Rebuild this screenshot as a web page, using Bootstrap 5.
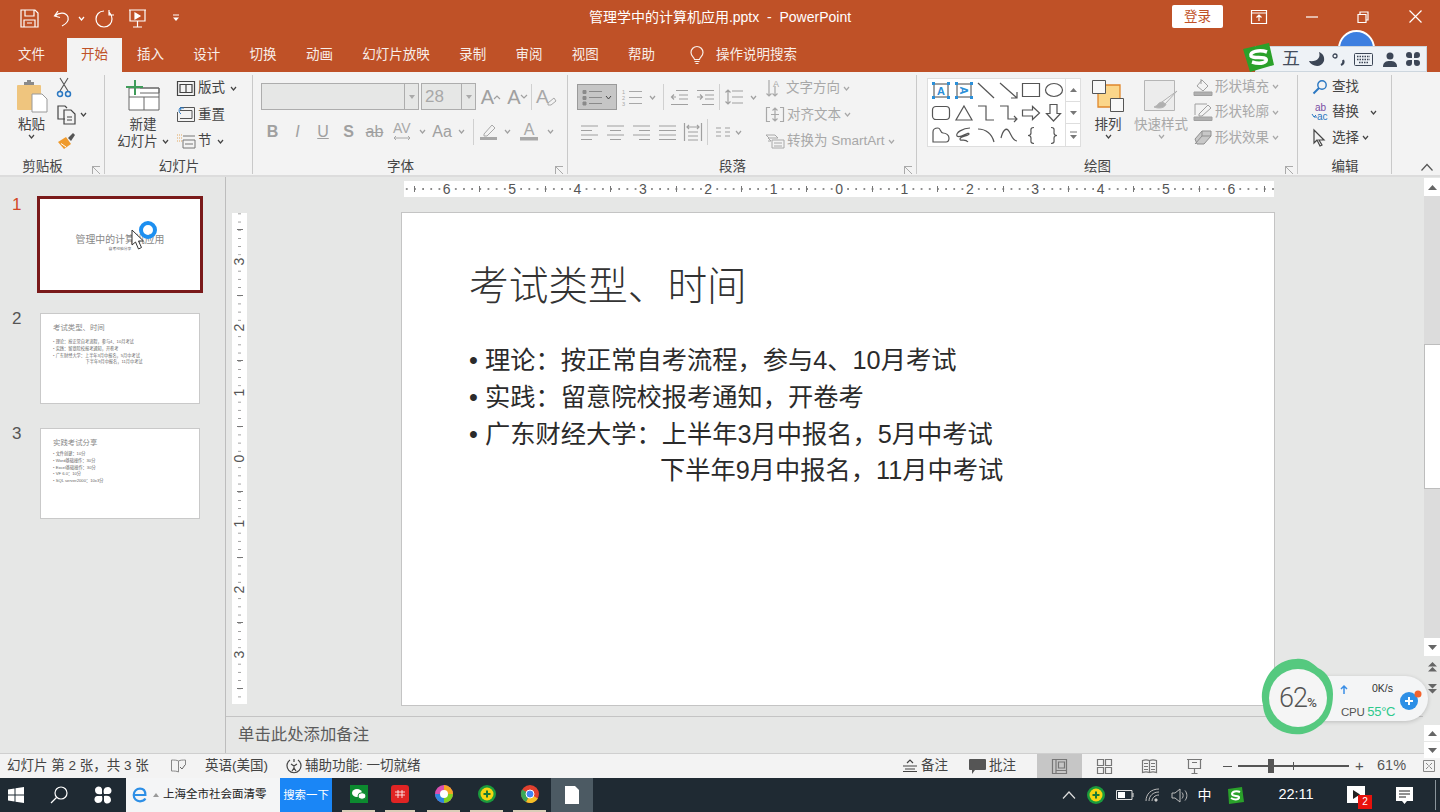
<!DOCTYPE html>
<html lang="zh-CN">
<head>
<meta charset="UTF-8">
<title>管理学中的计算机应用.pptx - PowerPoint</title>
<link href="https://cdn.jsdelivr.net/npm/bootstrap@5.3.0/dist/css/bootstrap.min.css" rel="stylesheet">
<style>
html,body{width:1440px;height:812px;overflow:hidden}
body{font-family:"Liberation Sans","Noto Sans CJK SC",sans-serif;font-size:13.5px;color:#444;background:#e6e7e6}
svg{display:block;flex:none;overflow:visible}
svg text{font-family:"Liberation Sans",sans-serif;stroke:none}
.ink{fill:none;stroke:currentColor;stroke-width:1.2}
.app-shell{width:1440px;height:812px;position:relative}

/* title bar + tabs */
.title-strip{height:36px;background:#bf5127;color:#fff;position:relative}
.qat{display:grid;grid-template-columns:20px 19px 14px 20px 22px 19px 14px 19px 25px 10px;align-items:center;height:36px;color:#fff}
.qat-chev{padding-left:5px}
.doc-title{position:absolute;left:0;right:0;top:7px;text-align:center;font-size:14px;line-height:20px}
.win-ctl{display:grid;grid-template-columns:51px 28px 16px 39px 12px 39px 12px 40px 13px;align-items:center;position:absolute;left:1172px;top:5px;height:23px}
.login-btn{background:#fff;color:#bf5127;border-radius:2px;height:23px;font-size:13.5px;line-height:23px;text-align:center;padding:0;border:0}
.tab-strip{height:36px;background:#bf5127;color:#f8eee9;display:flex;align-items:flex-end;padding-left:18px;position:relative}
.tab-item{width:56.3px;height:34px;line-height:34px;flex:none;white-space:nowrap}
.tab-file{width:49px}
.tab-on{width:55px;background:#f3f3f3;color:#bf5127;text-align:center;margin-right:15px}
.tab-wide{width:97px}
.tab-help{width:62px}
.tab-search{display:flex;align-items:center;gap:12px}
.user-dot{position:absolute;left:1338px;top:-6px;width:37px;height:37px;border-radius:50%;background:#3d7fe0;border:2px solid #fff}

/* ribbon */
.ribbon{height:105px;background:#f3f3f3;border-bottom:2px solid #dcdcdc;display:flex;position:relative}
.rib-group{display:flex;flex-direction:column;flex:none;height:103px;position:relative}
.rib-group::after{content:"";position:absolute;right:0;top:3px;bottom:1px;width:1px;background:#c9c9c9}
.rib-body{height:86px;display:flex;flex:none}
.rib-label{height:17px;line-height:17px;text-align:center;color:#444;position:relative}
.pad-left-lab{padding-right:20px}
.launcher{position:absolute;right:5px;bottom:1px;width:8px;height:8px;border-left:1px solid #aaa;border-top:1px solid #aaa;background:linear-gradient(45deg,transparent 44%,#aaa 44%,#aaa 56%,transparent 56%)}
.g-clip{width:105px}.g-slides{width:148px}.g-font{width:315px}.g-para{width:349px}.g-draw{width:381px}.g-edit{width:94px}
.big-btn{display:flex;flex-direction:column;align-items:center;padding-top:8px;line-height:17px;flex:none}
.big-icon{height:35px;display:flex;align-items:flex-start;justify-content:center;margin-bottom:1px}
.small-rows{display:flex;flex-direction:column;padding-top:3px;flex:none}
.small-row{height:26.5px;display:flex;align-items:center;gap:3px;white-space:nowrap}
.rows-tight{padding-top:2px}
.rows-tight .small-row{height:25.5px}
.chev{width:7px;height:7px;flex:none}
.off{color:#a8a8a8}
.bw-paste{width:45px;margin-left:9px}
.clip-col{margin-left:3px;width:40px}
.bw-new{width:62px;margin-left:7px}
.slide-col{margin-left:3px}
.slide-col .chev{margin-left:2px}
.font-wrap{padding:11px 0 0 8px}
.font-row{display:flex;align-items:center;height:27px}
.font-row2{height:27px;margin-top:8px;display:flex;align-items:center}
.combo{height:27px;background:#e6e7e6;border:1px solid #adadad;display:flex;justify-content:flex-end}
.combo-name{width:158px;margin-right:2px}
.combo-size{width:55px;justify-content:space-between;color:#a8a8a8;font-size:17px;line-height:25px;padding-left:3px}
.combo-drop{width:14px;border-left:1px solid #adadad;display:flex;align-items:center;justify-content:center}
.f-ic{display:flex;justify-content:center;align-items:center;flex:none;color:#a0a0a0}
.tt{font-size:20px;line-height:22px}
.v-sep{width:1px;height:26px;background:#d0d0d0;flex:none}
.font-grid-a{margin-left:1px;display:grid;grid-template-columns:27px 26px 1px 1px 28px;align-items:center}
.font-grid-b{display:grid;grid-template-columns:25px 25px 26px 25px 27px 27px 14px 26px 13px 5px 1px 5px 19px 19px 23px 20px;align-items:center;font-size:16px;margin-left:-1px}
.para-left{padding:12px 0 0 9px;width:191px;flex:none}
.para-r1{display:grid;grid-template-columns:40px 29px 12px 3px 2px 1px 2px 26px 27px 1px 4px 20px 18px;align-items:center;height:26px}
.bullet-on{height:26px;background:#c6c6c6;border:1px solid #9a9a9a;display:flex;align-items:center;justify-content:center;gap:3px;color:#666}
.para-r2{display:grid;grid-template-columns:25px 26px 26px 26px 26px 1px 1px 7px 16px 14px;align-items:center;height:26px;margin-top:9px}
.para-rt{padding-left:7px}
.gal-wrap{display:flex;padding-left:10px;padding-top:6px;flex:none}
.gallery{width:154px;height:69px;background:#fff;border:1px solid #dedede;display:flex;flex:none}
.gal-cells{display:grid;grid-template-columns:repeat(6,22.5px);grid-auto-rows:22.5px;width:137px;padding:0 0 0 2px;color:#555;place-items:center}
.gal-scroll{flex:1;display:flex;flex-direction:column;border-left:1px solid #dedede}
.gal-scroll div{flex:1;display:flex;align-items:center;justify-content:center;border-bottom:1px solid #dedede}
.gal-scroll div:last-child{border-bottom:0}
.bw-arr{width:32px;margin-left:11px}
.bw-style{width:56px;margin-left:9px}
.draw-rt{margin-left:5px}
.edit-rt{padding-left:13px;color:#444}
.ed-ic{width:18px;display:flex;justify-content:center;flex:none}
.ed-far{margin-left:8px}
.collapse-up{position:absolute;right:7px;bottom:4px;color:#555}

/* workspace */
.work-row{height:576px;display:flex}
.thumb-pane{width:226px;height:576px;border-right:1px solid #bdbdbd;padding-top:19px;flex:none;background:#e6e7e6}
.thumb-line{display:flex}
.thumb-gap-a{margin-bottom:20px}
.thumb-gap-b{margin-bottom:24px}
.thumb-no{width:40px;font-size:17px;line-height:18px;padding-left:12px;color:#555;flex:none;margin-top:-3px}
.thumb-no-on{color:#d24726;margin-top:0}
.thumb-card{width:160px;height:91px;background:#fff;border:1px solid #c9c9c9;color:#888;padding:8px 12px;flex:none;line-height:1;position:relative}
.thumb-first{width:166px;height:97px;border:3px solid #7a1a1a;margin-left:-3px;display:flex;flex-direction:column;align-items:center;padding:35px 0 0 0}
.thumb-t1{font-size:9.9px;line-height:12px;color:#888;white-space:nowrap}
.thumb-s1{font-size:3.8px;line-height:6px;color:#666;white-space:nowrap}
.thumb-t2{font-size:7.4px;line-height:12px;margin-bottom:5px;white-space:nowrap}
.thumb-t3{margin-bottom:2px}
.thumb-p{font-size:4.2px;line-height:6.8px;color:#666;white-space:pre}
.center-col{width:1197px;flex:none;display:flex;flex-direction:column}
.edit-area{height:539px;padding:4px 0 0 6px;flex:none}
.h-ruler{margin-left:172px;width:870px;height:16px;display:flex;color:#555;margin-bottom:15px;overflow:hidden;
 background:radial-gradient(circle at 1px 8px,#888 .7px,transparent 1px) 1.8px 0/8.175px 16px repeat-x #fff}
.h-ruler>span{width:65.4px;flex:none;text-align:center;font-size:14px;line-height:16px;
 background:linear-gradient(#777,#777) 0 5px/1px 6px no-repeat}
.h-ruler>span:first-child{margin-left:10px}
.h-ruler>span>b{font-weight:400;background:#fff;padding:0 2px}
.slide-row{display:flex;align-items:flex-start}
.v-ruler{width:15px;height:491px;margin-top:1px;display:flex;flex-direction:column;color:#555;overflow:hidden;flex:none;
 background:linear-gradient(#999 1px,transparent 1px) 6px .4px/3px 8.19px repeat-y #fff}
.v-ruler>span{height:65.5px;flex:none;display:flex;align-items:center;justify-content:center;font-size:14px;
 background:linear-gradient(#777,#777) 4.500px 0/6px 1px no-repeat}
.v-ruler>span:first-child{margin-top:16px}
.v-ruler>span>b{font-weight:400;transform:rotate(-90deg);background:#fff;padding:0 2px;line-height:13px}
.slide-sheet{margin-left:154px;width:874px;height:494px;background:#fff;border:1px solid #c4c4c4;padding:45px 0 0 67px;color:#222;flex:none}
.slide-h{font-size:39.7px;line-height:50px;margin-bottom:34px;color:#333;font-weight:300;font-family:"Noto Sans CJK SC",sans-serif}
.slide-ul{list-style:none;margin:0;padding:0;font-size:25.25px;line-height:36.8px;color:#2b2b2b}
.slide-ul li{position:relative;padding-left:16px;white-space:nowrap}
.slide-ul li.has-dot::before{content:"•";position:absolute;left:0;top:0}
.slide-ul li.cont-line{padding-left:191px}
.notes-bar{height:37px;border-top:1px solid #c4c4c4;padding-left:12px;font-size:16.4px;line-height:35px;color:#5c5c5c;flex:none}
.scroll-col{width:18px;flex:none;display:flex;flex-direction:column;padding:1px 0 0 1px}
.sc-btn{height:18px;background:#fff;display:flex;align-items:center;justify-content:center;flex:none;color:#666}
.sc-track{height:148px;background:#dcdcdc;flex:none}
.sc-track2{height:149px;background:#dcdcdc;flex:none}
.sc-thumb{height:145px;background:#fff;border:1px solid #bdbdbd;border-right:0;flex:none}
.sc-plain{height:22px;display:flex;align-items:center;justify-content:center;flex:none;color:#666}
.sc-gap{height:25px;flex:none}
.sc-small{height:16px;background:#fff;display:flex;align-items:center;justify-content:center;flex:none;color:#666;margin-bottom:1px}

/* status bar */
.status-bar{height:25px;background:#f3f3f3;border-top:1px solid #cfcfcf;display:flex;align-items:center;color:#444;font-size:13.5px;padding-left:7px;white-space:nowrap}
.st-pages{width:164px}
.st-book{width:34px}
.st-lang{width:81px}
.st-acc{display:flex;align-items:center;gap:3px;width:617px}
.st-notes{display:flex;align-items:center;gap:4px;width:66px}
.st-view{height:24px;display:flex;align-items:center;justify-content:center;width:45px;flex:none;color:#777}
.st-view-on{background:#c6c6c6}
.st-comm{display:flex;align-items:center;gap:3px;width:68px}
.st-zoom{display:flex;align-items:center;color:#555}
.zoom-minus{width:9px;height:1px;background:#555;margin:0 6px}
.zoom-track{width:111px;height:2px;background:#555;position:relative}
.zoom-thumb{position:absolute;left:30px;top:-6px;width:6px;height:14px;background:#555}
.zoom-tick{position:absolute;left:55px;top:-3px;width:1px;height:8px;background:#555}
.zoom-plus{width:21px;text-align:center;font-size:15px}
.zoom-pct{width:53px;padding-left:7px;font-size:14.5px}

/* taskbar */
.task-bar{height:34px;background:#1f2a33;display:grid;grid-template-columns:8px 17px 25px 18px 26px 18px 14px 154px 52px 10px 33px 10px 30px 12px 33px 10px 33px 10px 33px 5px 42px 1fr;align-items:center;color:#fff;position:relative}
.tb-search{height:34px;background:#f4f5f6;color:#222;display:flex;align-items:center;font-size:11.5px;padding-left:5px;white-space:nowrap}
.tb-go{height:34px;background:#1a86f6;color:#fff;font-size:11.4px;line-height:34px;text-align:center;white-space:nowrap}
.tb-active{height:34px;background:#4c5a63;display:flex;align-items:center;justify-content:center}
.tb-under{border-bottom:2px solid #d9cdb8;height:33px;display:flex;align-items:center;justify-content:center}
.tray{position:absolute;left:1056px;right:0;top:0;height:34px;display:grid;grid-template-columns:25px 30px 28px 27px 26px 25px 36px 86px 38px 54px 9px;align-items:center;justify-items:center}
.tray-clock{font-size:14.5px}
.tray-cn{font-size:14px}
.tray-badge{position:absolute;left:11px;top:9px;width:14px;height:14px;background:#e8120c;color:#fff;font-size:10px;line-height:14px;text-align:center}
.tray-video{position:relative;width:20px;height:18px;margin-left:-2px}
.tray-edge{width:1px;height:30px;background:#8a949b}

/* overlays */
.ime-bar{position:absolute;left:1255px;top:46px;width:172px;height:26px;background:#eef2f6;border:1px solid #cdd6de;display:grid;grid-template-columns:22px 26px 24px 22px 29px 23px 14px;align-items:center;padding-left:4px;color:#444d5c;font-size:18px;line-height:24px;z-index:5}
.ime-logo{position:absolute;left:1243px;top:43px;z-index:6}
.ptr-ring{position:absolute;left:139px;top:221px;width:18px;height:18px;border:4px solid #1d8ff0;border-radius:50%;z-index:5}
.ptr-arrow{position:absolute;left:131px;top:229px;z-index:6}
.cpu-pill{position:absolute;left:1300px;top:676px;width:128px;height:45px;background:#f4f5f6;border-radius:0 23px 23px 0;box-shadow:0 1px 4px rgba(0,0,0,.18);z-index:5;display:grid;grid-template-columns:41px 52px 1fr;grid-template-rows:24px 21px;padding-top:1px;align-items:center;color:#555}
.cpu-up{grid-column:1;margin-left:40px}
.cpu-net{font-size:10.5px;text-align:right;color:#333;grid-column:2}
.cpu-temp{grid-column:1 / span 2;font-size:11.5px;padding-left:41px;white-space:nowrap;letter-spacing:-.3px}
.cpu-temp b{font-weight:400;color:#2ec98c;font-size:13px}
.cpu-plus{grid-column:3;grid-row:1 / span 2;padding-left:7px}
.cpu-ring{position:absolute;left:1261px;top:658px;z-index:6}
.cpu-num{position:absolute;left:1269px;top:669px;width:58px;height:58px;display:flex;align-items:baseline;justify-content:center;line-height:58px;font-family:Roboto,sans-serif;font-weight:300;font-size:27px;color:#555;letter-spacing:-1px;z-index:7}
.cpu-num small{font-size:13.5px;font-weight:500;letter-spacing:0}
</style>
</head>
<body>
<div class="app-shell">

  <div class="title-strip">
    <div class="qat">
      <span></span>
      <svg width="19" height="19" viewBox="0 0 19 19" class="ink"><path d="M1 1h14l3 3v14H1zM5 1v6h9V1M4 18v-7h11v7M7 14h5"/></svg>
      <span></span>
      <svg width="19" height="19" viewBox="0 0 19 19" class="ink"><path d="M5 2 1.500 7 7 8.500M2 7c4-4 11-4 13 1 1 4-2 7-6 9"/></svg>
      <span class="qat-chev"><svg width="7" height="7" viewBox="0 0 7 7" class="ink"><path d="m1 2 2.500 3L6 2"/></svg></span>
      <svg width="19" height="19" viewBox="0 0 19 19" class="ink"><path d="M9 2c-5 0-8 4-8 8s3 8 8 8 8-4 8-8c0-3-1-5-3-7M14 1v5h5"/></svg>
      <span></span>
      <svg width="19" height="19" viewBox="0 0 19 19" class="ink"><path d="M1 1h17M2 1v11h15V1M9.500 12v6M5 18h9"/><path d="m7 4 5 3-5 3z" fill="currentColor"/></svg>
      <span></span>
      <svg width="8" height="8" viewBox="0 0 8 8"><path d="M1 1h6" stroke="#fff"/><path d="m1 3.500h6L4 7z" fill="#fff"/></svg>
    </div>
    <div class="doc-title">管理学中的计算机应用.pptx&nbsp; -&nbsp; PowerPoint</div>
    <div class="win-ctl">
      <button type="button" class="login-btn">登录</button>
      <span></span>
      <svg width="16" height="14" viewBox="0 0 16 14" class="ink"><path d="M.5.500h15v13H.5zM.5 3h15M8 11V5M5.500 7.500 8 5l2.500 2.500"/></svg>
      <span></span>
      <svg width="12" height="2" viewBox="0 0 12 2" class="ink"><path d="M0 1h12"/></svg>
      <span></span>
      <svg width="12" height="12" viewBox="0 0 12 12" class="ink"><path d="M1 3.500h8v8H1zM3 3.500V1h8v8H9"/></svg>
      <span></span>
      <svg width="13" height="13" viewBox="0 0 13 13" class="ink"><path d="m.5.500 12 12M12.500.500l-12 12"/></svg>
    </div>
  </div>

  <div class="tab-strip">
    <div class="tab-item tab-file">文件</div>
    <div class="tab-item tab-on">开始</div>
    <div class="tab-item">插入</div>
    <div class="tab-item">设计</div>
    <div class="tab-item">切换</div>
    <div class="tab-item">动画</div>
    <div class="tab-item tab-wide">幻灯片放映</div>
    <div class="tab-item">录制</div>
    <div class="tab-item">审阅</div>
    <div class="tab-item">视图</div>
    <div class="tab-item tab-help">帮助</div>
    <div class="tab-item tab-search">
      <svg width="14" height="19" viewBox="0 0 14 19" class="ink"><path d="M4.500 13.500C4 11 1 10 1 6.500a6 6 0 0 1 12 0c0 3.500-3 4.500-3.500 7zM4.500 15.500h5M5.500 17.500h3"/></svg>
      <span>操作说明搜索</span>
    </div>
    <div class="user-dot"></div>
  </div>

  <div class="ribbon">
    <!-- clipboard -->
    <div class="rib-group g-clip">
      <div class="rib-body">
        <div class="big-btn bw-paste">
          <div class="big-icon">
            <svg width="32" height="33" viewBox="0 0 32 33"><rect x="1" y="5" width="24" height="25" rx="1" fill="#efc57e"/><path d="M8 5V2h3V0h4v2h3v3z" fill="#8a8a8a"/><path d="M16 14h10l5 5v13H16z" fill="#fff" stroke="#999"/></svg>
          </div>
          <span>粘贴</span>
          <svg class="chev ink" viewBox="0 0 7 7"><path d="m1 2 2.500 3L6 2"/></svg>
        </div>
        <div class="small-rows clip-col">
          <div class="small-row">
            <svg width="14" height="20" viewBox="0 0 14 20" fill="none"><path d="m3 0 8 13M11 0 3 13" stroke="#555" stroke-width="1.100"/><circle cx="3" cy="16" r="2.500" stroke="#2b78c2" stroke-width="1.500"/><circle cx="11" cy="16" r="2.500" stroke="#2b78c2" stroke-width="1.500"/></svg>
          </div>
          <div class="small-row">
            <svg width="20" height="20" viewBox="0 0 20 20" class="ink"><path d="M8 14H1V1h7l2 2M7 5h7l4 4v10H7zM10 12h5M10 15h5"/></svg>
            <svg class="chev ink" viewBox="0 0 7 7"><path d="m1 2 2.500 3L6 2"/></svg>
          </div>
          <div class="small-row">
            <svg width="19" height="18" viewBox="0 0 19 18"><path d="M1 10 9 5l5 7-7 5z" fill="#ef9a2c"/><path d="M4 11.500 9 15" stroke="#fff"/><path d="m11 6 5-5 2 2-4 6z" fill="#555"/></svg>
          </div>
        </div>
      </div>
      <div class="rib-label pad-left-lab">剪贴板<span class="launcher"></span></div>
    </div>
    <!-- slides -->
    <div class="rib-group g-slides">
      <div class="rib-body">
        <div class="big-btn bw-new">
          <div class="big-icon">
            <svg width="34" height="31" viewBox="0 0 34 31"><path d="M3 8h30v22H3z" fill="#fff" stroke="#666"/><path d="M3 17h30M18 17v13M14 8h19v5H14" fill="none" stroke="#666"/><path d="M9 0v15M0 7h17" stroke="#3f9c5a" stroke-width="2"/></svg>
          </div>
          <span>新建</span>
          <span class="d-flex align-items-center gap-1">幻灯片<svg class="chev ink" viewBox="0 0 7 7"><path d="m1 2 2.500 3L6 2"/></svg></span>
        </div>
        <div class="small-rows slide-col">
          <div class="small-row">
            <svg width="18" height="15" viewBox="0 0 18 15" class="ink"><path d="M.5.500h17v14H.5zM3 3.500h12v8H3zM9 3.500v8"/></svg><span>版式</span>
            <svg class="chev ink" viewBox="0 0 7 7"><path d="m1 2 2.500 3L6 2"/></svg>
          </div>
          <div class="small-row">
            <svg width="18" height="15" viewBox="0 0 18 15" fill="none" stroke="#555"><path d="M4 .500h13.500v14H.5V5M3 3.500h12v8H3"/><path d="M7 1H3l1-1M3 1l1 2M3 1a4 4 0 0 0 1 6" stroke="#2b78c2"/></svg><span>重置</span>
          </div>
          <div class="small-row">
            <svg width="18" height="15" viewBox="0 0 18 15" fill="none"><path d="M6 2h12M6 6h12M6 6v8h12V6M8 10h8" stroke="#777"/><path d="M0 1h5M0 4h5M0 7h5" stroke="#e2a65c" stroke-dasharray="1 1"/></svg><span>节</span>
            <svg class="chev ink" viewBox="0 0 7 7"><path d="m1 2 2.500 3L6 2"/></svg>
          </div>
        </div>
      </div>
      <div class="rib-label">幻灯片</div>
    </div>
    <!-- font -->
    <div class="rib-group g-font">
      <div class="rib-body">
        <div class="font-wrap">
          <div class="font-row">
            <div class="combo combo-name"><div class="combo-drop"><svg width="6" height="4" viewBox="0 0 6 4"><path d="M0 0h6L3 4z" fill="#aaa"/></svg></div></div>
            <div class="combo combo-size"><span>28</span><div class="combo-drop"><svg width="6" height="4" viewBox="0 0 6 4"><path d="M0 0h6L3 4z" fill="#aaa"/></svg></div></div>
            <div class="font-grid-a off">
              <div class="f-ic"><span class="tt">A</span><svg width="6" height="4" viewBox="0 0 6 4" class="ink"><path d="m0 4 3-3 3 3"/></svg></div>
              <div class="f-ic"><span class="tt">A</span><svg width="6" height="4" viewBox="0 0 6 4" class="ink"><path d="m0 0 3 3 3-3"/></svg></div>
              <span></span><span class="v-sep"></span>
              <div class="f-ic"><svg width="20" height="18" viewBox="0 0 20 18"><text x="0" y="15" font-size="19" fill="#a8a8a8">A</text><path d="m12 15 6-5 2 3-5 4h-3z" fill="#f3f3f3" stroke="#a8a8a8"/></svg></div>
            </div>
          </div>
          <div class="font-row2">
            <div class="font-grid-b">
              <div class="f-ic fw-bold">B</div>
              <div class="f-ic fst-italic">I</div>
              <div class="f-ic text-decoration-underline">U</div>
              <div class="f-ic fw-bold">S</div>
              <div class="f-ic text-decoration-line-through">ab</div>
              <div class="f-ic"><svg width="18" height="20" viewBox="0 0 18 20"><text x="0" y="11" font-size="14" fill="#a8a8a8">AV</text><path d="M1 16h16M3 14l-2 2 2 2M15 14l2 2-2 2" fill="none" stroke="#a8a8a8"/></svg></div>
              <div class="f-ic"><svg class="chev ink" viewBox="0 0 7 7"><path d="m1 2 2.500 3L6 2"/></svg></div>
              <div class="f-ic">Aa</div>
              <div class="f-ic"><svg class="chev ink" viewBox="0 0 7 7"><path d="m1 2 2.500 3L6 2"/></svg></div>
              <span></span><span class="v-sep"></span><span></span>
              <div class="f-ic"><svg width="19" height="19" viewBox="0 0 19 19"><path d="m5 12 8-9 3 3-8 8H5z" fill="none" stroke="#a8a8a8"/><path d="M1 15h17v3H1z" fill="#a8a8a8"/></svg></div>
              <div class="f-ic"><svg class="chev ink" viewBox="0 0 7 7"><path d="m1 2 2.500 3L6 2"/></svg></div>
              <div class="f-ic"><svg width="18" height="19" viewBox="0 0 18 19"><text x="9" y="13" font-size="16" text-anchor="middle" fill="#a8a8a8">A</text><path d="M0 15h18v3.500H0z" fill="#a8a8a8"/></svg></div>
              <div class="f-ic"><svg class="chev ink" viewBox="0 0 7 7"><path d="m1 2 2.500 3L6 2"/></svg></div>
            </div>
          </div>
        </div>
      </div>
      <div class="rib-label pad-left-lab">字体<span class="launcher"></span></div>
    </div>
    <!-- paragraph -->
    <div class="rib-group g-para">
      <div class="rib-body">
        <div class="para-left">
          <div class="para-r1 off">
            <div class="bullet-on">
              <svg width="19" height="15" viewBox="0 0 19 15" fill="none" stroke="#8a8a8a"><path d="M6 1.500h13M6 7.500h13M6 13.500h13"/><path d="M0 .5h3v3H0zM0 6.500h3v3H0zM0 12h3v3H0z" fill="#8a8a8a"/></svg>
              <svg class="chev" viewBox="0 0 7 7" fill="none" stroke="#444"><path d="m1 2 2.500 3L6 2"/></svg>
            </div>
            <div class="f-ic"><svg width="20" height="17" viewBox="0 0 20 17"><path d="M7 2.500h13M7 8.500h13M7 14.500h13" fill="none" stroke="#a8a8a8" stroke-width="1.200"/><text x="0" y="5" font-size="5.500" fill="#a8a8a8">1</text><text x="0" y="11" font-size="5.500" fill="#a8a8a8">2</text><text x="0" y="17" font-size="5.500" fill="#a8a8a8">3</text></svg></div>
            <div class="f-ic"><svg class="chev ink" viewBox="0 0 7 7"><path d="m1 2 2.500 3L6 2"/></svg></div>
            <span></span><span></span><span class="v-sep"></span><span></span>
            <div class="f-ic"><svg width="17" height="15" viewBox="0 0 17 15" class="ink"><path d="M5 .5h12M8 5h9M8 9h9M0 14.500h17M5 7H0M3 4.500 .5 7 3 9.500"/></svg></div>
            <div class="f-ic"><svg width="17" height="15" viewBox="0 0 17 15" class="ink"><path d="M0 .5h17M8 5h9M8 9h9M5 14.500h12M0 7h5M3 4.500 5.500 7 3 9.500"/></svg></div>
            <span class="v-sep"></span><span></span>
            <div class="f-ic"><svg width="18" height="16" viewBox="0 0 18 16" class="ink"><path d="M7 2h11M7 8h11M7 14h11M3 1v14M.5 3.500 3 1l2.500 2.500M.5 12.500 3 15l2.500-2.500"/></svg></div>
            <div class="f-ic"><svg class="chev ink" viewBox="0 0 7 7"><path d="m1 2 2.500 3L6 2"/></svg></div>
          </div>
          <div class="para-r2 off">
            <div class="f-ic"><svg width="17" height="15" viewBox="0 0 17 15" class="ink"><path d="M0 1h17M0 5.500h11M0 10h17M0 14.500h11"/></svg></div>
            <div class="f-ic"><svg width="17" height="15" viewBox="0 0 17 15" class="ink"><path d="M0 1h17M3 5.500h11M0 10h17M3 14.500h11"/></svg></div>
            <div class="f-ic"><svg width="17" height="15" viewBox="0 0 17 15" class="ink"><path d="M0 1h17M6 5.500h11M0 10h17M6 14.500h11"/></svg></div>
            <div class="f-ic"><svg width="17" height="15" viewBox="0 0 17 15" class="ink"><path d="M0 1h17M0 5.500h17M0 10h17M0 14.500h17"/></svg></div>
            <div class="f-ic"><svg width="18" height="18" viewBox="0 0 18 18" class="ink"><path d="M.5 0v18M17.500 0v18M4 9h10M4 13h10M4 17h10M3 4h12M5 2 3 4l2 2M13 2l2 2-2 2"/></svg></div>
            <span></span><span class="v-sep"></span><span></span>
            <div class="f-ic"><svg width="14" height="10" viewBox="0 0 14 10" class="ink"><path d="M0 1h5M0 5h5M0 9h5M9 1h5M9 5h5M9 9h5"/></svg></div>
            <div class="f-ic"><svg class="chev ink" viewBox="0 0 7 7"><path d="m1 2 2.500 3L6 2"/></svg></div>
          </div>
        </div>
        <div class="small-rows para-rt off">
          <div class="small-row">
            <svg width="17" height="18" viewBox="0 0 17 18"><path d="M3 1v16M.5 14.500 3 17l2.500-2.500M9 7v10M6.500 14.500 9 17l2.500-2.500" fill="none" stroke="#a8a8a8" stroke-width="1.200"/><text x="7" y="8" font-size="9" fill="#a8a8a8">A</text></svg><span>文字方向</span>
            <svg class="chev ink" viewBox="0 0 7 7"><path d="m1 2 2.500 3L6 2"/></svg>
          </div>
          <div class="small-row">
            <svg width="18" height="15" viewBox="0 0 18 15" class="ink"><path d="M4 .5H.5v14H4M14 .5h3.500v14H14M9 1v13M6.500 3.500 9 1l2.500 2.500M6.500 11.500 9 14l2.500-2.500M5 7.500h8"/></svg><span>对齐文本</span>
            <svg class="chev ink" viewBox="0 0 7 7"><path d="m1 2 2.500 3L6 2"/></svg>
          </div>
          <div class="small-row">
            <svg width="18" height="14" viewBox="0 0 18 14" fill="none" stroke="#a8a8a8"><path d="M0 1h9l3 3H3zM2 4l3 3h-3M6 6h12v8H6zM8 9h8M8 12h8"/></svg><span>转换为 SmartArt</span>
            <svg class="chev ink" viewBox="0 0 7 7"><path d="m1 2 2.500 3L6 2"/></svg>
          </div>
        </div>
      </div>
      <div class="rib-label pad-left-lab">段落<span class="launcher"></span></div>
    </div>
    <!-- drawing -->
    <div class="rib-group g-draw">
      <div class="rib-body">
        <div class="gal-wrap">
          <div class="gallery">
            <div class="gal-cells">
              <svg width="18" height="17" viewBox="0 0 18 17"><path d="M2 2h14v13H2z" fill="none" stroke="#444"/><text x="9" y="12.500" font-size="11" font-weight="700" text-anchor="middle" fill="#2b8fd8">A</text><path d="M0 0h3v3H0zM15 0h3v3h-3zM0 14h3v3H0zM15 14h3v3h-3z" fill="#2b8fd8"/></svg>
              <svg width="18" height="17" viewBox="0 0 18 17"><path d="M2 2h14v13H2z" fill="none" stroke="#444"/><text x="0" y="0" font-size="11" font-weight="700" text-anchor="middle" fill="#2b8fd8" transform="translate(5 8.500) rotate(90)">A</text><path d="M0 0h3v3H0zM15 0h3v3h-3zM0 14h3v3H0zM15 14h3v3h-3z" fill="#2b8fd8"/></svg>
              <svg width="18" height="17" viewBox="0 0 18 17" class="ink"><path d="m1 1 16 15"/></svg>
              <svg width="18" height="17" viewBox="0 0 18 17" class="ink"><path d="m0 1 17 15M11 16h6v-6"/></svg>
              <svg width="18" height="14" viewBox="0 0 18 14" class="ink"><path d="M.5.5h17v13H.5z"/></svg>
              <svg width="18" height="14" viewBox="0 0 18 14" class="ink"><ellipse cx="9" cy="7" rx="8.500" ry="6.500"/></svg>
              <svg width="18" height="14" viewBox="0 0 18 14" class="ink"><rect x=".5" y=".5" width="17" height="13" rx="3.500"/></svg>
              <svg width="18" height="16" viewBox="0 0 18 16" class="ink"><path d="M9 1 17 15H1z"/></svg>
              <svg width="18" height="16" viewBox="0 0 18 16" class="ink"><path d="M1 1h8v14h8"/></svg>
              <svg width="18" height="16" viewBox="0 0 18 16" class="ink"><path d="M0 1h8v13h9M14 11l3 3-3 3"/></svg>
              <svg width="18" height="14" viewBox="0 0 18 14" class="ink"><path d="M.5 4h10V.5l7 6.500-7 6.500V10H.5z"/></svg>
              <svg width="15" height="18" viewBox="0 0 15 18" class="ink"><path d="M4 .5h7v9h3.500L7.500 17 .5 9.500H4z"/></svg>
              <svg width="18" height="16" viewBox="0 0 18 16" class="ink"><path d="M1 5c0-3 2-4 5-4 3 0 2 5 5 5s6 2 6 5-1 4-3 4H1z"/></svg>
              <svg width="18" height="16" viewBox="0 0 18 16" class="ink"><path d="M15 1C8 1 0 6 2 9c3 3 12-5 12-2 0 2-9 2-9 5 0 3 5-1 8 3"/></svg>
              <svg width="18" height="16" viewBox="0 0 18 16" class="ink"><path d="M1 2c8 0 14 5 16 13"/></svg>
              <svg width="18" height="16" viewBox="0 0 18 16" class="ink"><path d="M1 11C3 3 6 1 8 3c3 3 4 11 9 11"/></svg>
              <svg width="10" height="17" viewBox="0 0 10 17" class="ink"><path d="M8 .5C4 .5 5 3 5 6c0 2-2 2.500-3 2.500 1 0 3 .5 3 2.500 0 3-1 5.500 3 5.500"/></svg>
              <svg width="10" height="17" viewBox="0 0 10 17" class="ink"><path d="M2 .5c4 0 3 2.500 3 5.500 0 2 2 2.500 3 2.500-1 0-3 .5-3 2.500 0 3 1 5.500-3 5.500"/></svg>
            </div>
            <div class="gal-scroll">
              <div><svg width="7" height="4" viewBox="0 0 7 4"><path d="M0 4h7L3.500 0z" fill="#777"/></svg></div>
              <div><svg width="7" height="4" viewBox="0 0 7 4"><path d="M0 0h7L3.500 4z" fill="#777"/></svg></div>
              <div><svg width="7" height="7" viewBox="0 0 7 7"><path d="M0 0h7" stroke="#777"/><path d="M0 3h7L3.500 7z" fill="#777"/></svg></div>
            </div>
          </div>
        </div>
        <div class="big-btn bw-arr">
          <div class="big-icon">
            <svg width="32" height="32" viewBox="0 0 32 32"><path d="M6 5h22v22H6z" fill="#fbd68a" stroke="#e0872c" stroke-width="1.300"/><path d="M.5.5h13v13H.5zM18.500 18.500h13v13h-13z" fill="#f8f8f8" stroke="#555"/></svg>
          </div>
          <span>排列</span>
          <svg class="chev ink" viewBox="0 0 7 7"><path d="m1 2 2.500 3L6 2"/></svg>
        </div>
        <div class="big-btn bw-style off">
          <div class="big-icon">
            <svg width="34" height="33" viewBox="0 0 34 33" fill="none" stroke="#b5b5b5"><path d="M.5.5h30v30H.5z" fill="#ececec"/><path d="M33 11 21 24l-3-2z" fill="#f3f3f3" stroke="#b0b0b0"/><path d="M18 22c-4 0-4 4-8 5 5 2 11 1 12-3z" fill="#b0b0b0"/></svg>
          </div>
          <span class="text-nowrap">快速样式</span>
          <svg class="chev ink" viewBox="0 0 7 7"><path d="m1 2 2.500 3L6 2"/></svg>
        </div>
        <div class="small-rows rows-tight draw-rt off">
          <div class="small-row">
            <svg width="18" height="18" viewBox="0 0 18 18" fill="none" stroke="#a0a0a0"><path d="m3 8 5-6 6 6-5 5zM7 1v5"/><path d="M0 14h18v3.500H0z" fill="#b0b0b0"/></svg><span>形状填充</span>
            <svg class="chev ink" viewBox="0 0 7 7"><path d="m1 2 2.500 3L6 2"/></svg>
          </div>
          <div class="small-row">
            <svg width="18" height="18" viewBox="0 0 18 18" fill="none" stroke="#a0a0a0"><path d="M1 12V1h12M5 11l9-9 3 3-9 8H5z"/><path d="M0 14h18v3.500H0z" fill="#b0b0b0"/></svg><span>形状轮廓</span>
            <svg class="chev ink" viewBox="0 0 7 7"><path d="m1 2 2.500 3L6 2"/></svg>
          </div>
          <div class="small-row">
            <svg width="18" height="15" viewBox="0 0 18 15"><path d="M1 9 8 1h9v5l-7 8H3z" fill="#c8c8c8" stroke="#8f8f8f"/><path d="M8 1v5h9M8 6l-7 8" fill="none" stroke="#8f8f8f"/></svg><span>形状效果</span>
            <svg class="chev ink" viewBox="0 0 7 7"><path d="m1 2 2.500 3L6 2"/></svg>
          </div>
        </div>
      </div>
      <div class="rib-label pad-left-lab">绘图<span class="launcher"></span></div>
    </div>
    <!-- editing -->
    <div class="rib-group g-edit">
      <div class="rib-body">
        <div class="small-rows rows-tight edit-rt">
          <div class="small-row">
            <span class="ed-ic"><svg width="14" height="14" viewBox="0 0 14 14" fill="none" stroke="#2b78c2" stroke-width="1.400"><circle cx="9" cy="5" r="4.200"/><path d="M6 8 .5 13.500" stroke-width="2"/></svg></span><span>查找</span>
          </div>
          <div class="small-row">
            <span class="ed-ic"><svg width="17" height="18" viewBox="0 0 17 18"><text x="3" y="8" font-size="10" fill="#7a4ea3">ab</text><text x="5" y="17" font-size="10" fill="#2b78c2">ac</text><path d="M0 11l2 3 2-2M2 14h3" fill="none" stroke="#2b78c2"/></svg></span>
            <span>替换</span><svg class="chev ink ed-far" viewBox="0 0 7 7"><path d="m1 2 2.500 3L6 2"/></svg>
          </div>
          <div class="small-row">
            <span class="ed-ic"><svg width="14" height="17" viewBox="0 0 14 17" class="ink"><path d="M1 1v13l3-3 3 6 2-1-3-5h5z"/></svg></span>
            <span>选择</span><svg class="chev ink" viewBox="0 0 7 7"><path d="m1 2 2.500 3L6 2"/></svg>
          </div>
        </div>
      </div>
      <div class="rib-label">编辑</div>
    </div>
    <svg class="collapse-up ink" width="12" height="7" viewBox="0 0 12 7"><path d="m.5 6.500 5.500-6 5.500 6"/></svg>
  </div>

  <div class="work-row">
    <div class="thumb-pane">
      <div class="thumb-line thumb-gap-a">
        <div class="thumb-no thumb-no-on">1</div>
        <div class="thumb-card thumb-first">
          <div class="thumb-t1">管理中的计算机应用</div>
          <div class="thumb-s1">自考经验分享</div>
        </div>
      </div>
      <div class="thumb-line thumb-gap-b">
        <div class="thumb-no">2</div>
        <div class="thumb-card">
          <div class="thumb-t2">考试类型、时间</div>
          <div class="thumb-p">• 理论：按正常自考流程，参与4、10月考试
• 实践：留意院校报考通知，开卷考
• 广东财经大学：上半年3月中报名，5月中考试
                            下半年9月中报名，11月中考试</div>
        </div>
      </div>
      <div class="thumb-line">
        <div class="thumb-no">3</div>
        <div class="thumb-card">
          <div class="thumb-t2 thumb-t3">实践考试分享</div>
          <div class="thumb-p">• 文件创建：10分
• Word基础操作：30分
• Excel基础操作：30分
• VF 6.0：10分
• SQL server2000：10x3分</div>
        </div>
      </div>
    </div>

    <div class="center-col">
      <div class="edit-area">
        <div class="h-ruler">
          <span><b>6</b></span><span><b>5</b></span><span><b>4</b></span><span><b>3</b></span><span><b>2</b></span><span><b>1</b></span><span><b>0</b></span><span><b>1</b></span><span><b>2</b></span><span><b>3</b></span><span><b>4</b></span><span><b>5</b></span><span><b>6</b></span><span></span>
        </div>
        <div class="slide-row">
          <div class="v-ruler">
            <span><b>3</b></span><span><b>2</b></span><span><b>1</b></span><span><b>0</b></span><span><b>1</b></span><span><b>2</b></span><span><b>3</b></span><span></span>
          </div>
          <div class="slide-sheet">
            <div class="slide-h">考试类型、时间</div>
            <ul class="slide-ul">
              <li class="has-dot">理论：按正常自考流程，参与4、10月考试</li>
              <li class="has-dot">实践：留意院校报考通知，开卷考</li>
              <li class="has-dot">广东财经大学：上半年3月中报名，5月中考试</li>
              <li class="cont-line">下半年9月中报名，11月中考试</li>
            </ul>
          </div>
        </div>
      </div>
      <div class="notes-bar">单击此处添加备注</div>
    </div>

    <div class="scroll-col">
      <div class="sc-btn"><svg width="9" height="5" viewBox="0 0 9 5"><path d="M0 5h9L4.500 0z" fill="#666"/></svg></div>
      <div class="sc-track"></div>
      <div class="sc-thumb"></div>
      <div class="sc-track2"></div>
      <div class="sc-btn"><svg width="9" height="5" viewBox="0 0 9 5"><path d="M0 0h9L4.500 5z" fill="#666"/></svg></div>
      <div class="sc-plain"><svg width="9" height="10" viewBox="0 0 9 10"><path d="M0 4.500h9L4.500 0zM0 9.500h9L4.500 5z" fill="#666"/></svg></div>
      <div class="sc-plain"><svg width="9" height="10" viewBox="0 0 9 10"><path d="M0 0h9L4.500 4.500zM0 5h9L4.500 9.500z" fill="#666"/></svg></div>
      <div class="sc-gap"></div>
      <div class="sc-small"><svg width="9" height="5" viewBox="0 0 9 5"><path d="M0 5h9L4.500 0z" fill="#666"/></svg></div>
      <div class="sc-small"><svg width="9" height="5" viewBox="0 0 9 5"><path d="M0 0h9L4.500 5z" fill="#666"/></svg></div>
    </div>
  </div>

  <div class="status-bar">
    <span class="st-pages">幻灯片 第 2 张，共 3 张</span>
    <span class="st-book"><svg width="15" height="14" viewBox="0 0 15 14" fill="none" stroke="#888"><path d="M7.500 2C6 1 3 1 .5 1v11c3 0 5 0 7 1V2c2-1 4-1 7-1v5"/><path d="m9 8 2 2 3-4" stroke="#666"/></svg></span>
    <span class="st-lang">英语(美国)</span>
    <span class="st-acc"><svg width="16" height="16" viewBox="0 0 16 16" class="ink"><path d="M4 2a7 7 0 1 0 8 0M8 1v3M5 6l3 2 3-2M8 8v2l-2 3M8 10l2 3"/></svg><span>辅助功能: 一切就绪</span></span>
    <span class="st-notes"><svg width="14" height="12" viewBox="0 0 14 12" class="ink"><path d="M0 6h14M2 9h10M0 11.500h14M4 3l3-3 3 3"/></svg><span>备注</span></span>
    <span class="st-comm"><svg width="17" height="15" viewBox="0 0 17 15"><path d="M1 0h15a1 1 0 0 1 1 1v9a1 1 0 0 1-1 1H6l-3 4v-4H1a1 1 0 0 1-1-1V1a1 1 0 0 1 1-1z" fill="#555"/></svg><span>批注</span></span>
    <span class="st-view st-view-on"><svg width="15" height="15" viewBox="0 0 15 15" class="ink"><path d="M.5.5h14v14H.5zM4 .5v14M6.500 3h6v6h-6zM4 11.500h10"/></svg></span>
    <span class="st-view"><svg width="15" height="15" viewBox="0 0 15 15" class="ink"><path d="M.5.5h6v6h-6zM8.500.5h6v6h-6zM.5 8.500h6v6h-6zM8.500 8.500h6v6h-6z"/></svg></span>
    <span class="st-view"><svg width="15" height="15" viewBox="0 0 15 15" class="ink"><path d="M.5 1.500C3 .5 5 .5 7.500 1.500c2.500-1 4.500-1 7 0v12c-2.500-1-4.500-1-7 0-2.500-1-4.500-1-7 0zM7.500 1.500v12M2 4.500h4M2 7.500h4M2 10.500h4M9 4.500h4M9 7.500h4M9 10.500h4"/></svg></span>
    <span class="st-view"><svg width="15" height="15" viewBox="0 0 15 15" class="ink"><path d="M0 .5h15M1.500.5v9h12v-9M7.500 9.500v5M4.500 14.500h6M5 3.500h5"/></svg></span>
    <span class="st-zoom">
      <span class="zoom-minus"></span>
      <span class="zoom-track"><span class="zoom-thumb"></span><span class="zoom-tick"></span></span>
      <span class="zoom-plus">+</span>
      <span class="zoom-pct">61%</span>
      <svg width="12" height="12" viewBox="0 0 12 12" fill="none" stroke="#888"><path d="M.5.5h11v11H.5zM3 3l2.500 2.500M9 3 6.500 5.500M3 9l2.500-2.500M9 9 6.500 6.500"/></svg>
    </span>
  </div>

  <div class="task-bar">
    <span></span>
    <svg width="16" height="16" viewBox="0 0 16 16" fill="#fff"><path d="m0 2.500 6.500-1V7.500H0zM7.500 1.300 16 0v7.500H7.500zM0 8.500h6.500v6L0 13.500zM7.500 8.500H16V16l-8.500-1.300z"/></svg>
    <span></span>
    <svg width="18" height="18" viewBox="0 0 18 18" fill="none" stroke="#fff" stroke-width="1.200"><circle cx="11" cy="7" r="6"/><path d="M6.500 11.500 1 17"/></svg>
    <span></span>
    <svg width="18" height="18" viewBox="0 0 18 18" fill="#fff"><path d="M8 8C4 9 1 8 1 4s6-5 7-1zM10 8c-1-4 0-7 4-7s5 6 1 7zM10 10c4-1 7 0 7 4s-6 5-7 1zM8 10c1 4 0 7-4 7s-5-6-1-7z"/></svg>
    <span></span>
    <div class="tb-search">
      <svg width="18" height="18" viewBox="0 0 20 20" fill="none" stroke="#2d8fe6" stroke-width="2.400"><path d="M3 10h13c0-4-2-7-6-7s-7 3-7 7 3 7 7 7c3 0 5-1 6-3"/></svg>
      <svg width="6" height="4" viewBox="0 0 6 4" class="mx-1"><path d="M0 4h6L3 0z" fill="#999"/></svg>
      <span>上海全市社会面清零</span>
    </div>
    <div class="tb-go">搜索一下</div>
    <span></span>
    <div class="tb-under"><svg width="18" height="18" viewBox="0 0 18 18"><rect width="18" height="18" fill="#0c8a2f"/><ellipse cx="7" cy="8" rx="5" ry="4" fill="#fff"/><ellipse cx="12" cy="11" rx="4" ry="3.300" fill="#fff" stroke="#0c8a2f"/></svg></div>
    <span></span>
    <div class="tb-under"><svg width="18" height="18" viewBox="0 0 18 18"><rect width="18" height="18" rx="3" fill="#e02424"/><path d="M4 7h10M4 10h10M7 5v8M11 5v8" stroke="#fff" stroke-width=".8"/></svg></div>
    <span></span>
    <div class="tb-under"><svg width="18" height="18" viewBox="0 0 18 18"><circle cx="9" cy="9" r="9" fill="#d94fb0"/><path d="M9 0a9 9 0 0 1 9 9H9z" fill="#f5a623"/><path d="M18 9a9 9 0 0 1-9 9V9z" fill="#7ed321"/><path d="M9 18a9 9 0 0 1-9-9h9z" fill="#2e86de"/><circle cx="9" cy="9" r="4" fill="#fff"/></svg></div>
    <span></span>
    <div class="tb-under"><svg width="18" height="18" viewBox="0 0 18 18"><circle cx="9" cy="9" r="9" fill="#1b9a3d"/><circle cx="9" cy="9" r="6.500" fill="#f6d513"/><path d="M9 5.500v7M5.500 9h7" stroke="#1b7a35" stroke-width="2"/></svg></div>
    <span></span>
    <div class="tb-under"><svg width="18" height="18" viewBox="0 0 18 18"><circle cx="9" cy="9" r="9" fill="#e2412f"/><path d="M9 9 17 13.600A9 9 0 0 1 5 17z" fill="#f6c026"/><path d="M9 9 5 17A9 9 0 0 1 1 4.500z" fill="#3aa757"/><circle cx="9" cy="9" r="4" fill="#4285f4" stroke="#fff"/></svg></div>
    <span></span>
    <div class="tb-active"><svg width="14" height="18" viewBox="0 0 14 18"><path d="M0 0h10l4 4v14H0z" fill="#fff"/></svg></div>
    <span></span>
    <div class="tray">
      <svg width="14" height="8" viewBox="0 0 14 8" fill="none" stroke="#ddd" stroke-width="1.200"><path d="m1 7.500 6-6.500 6 6.500"/></svg>
      <svg width="18" height="18" viewBox="0 0 18 18"><circle cx="9" cy="9" r="9" fill="#1b9a3d"/><circle cx="9" cy="9" r="6.500" fill="#f6d513"/><path d="M9 5.500v7M5.500 9h7" stroke="#1b7a35" stroke-width="2"/></svg>
      <svg width="18" height="10" viewBox="0 0 18 10" fill="none" stroke="#ddd"><path d="M.5.5h15.500v9H.5z"/><path d="M17 3v4"/><path d="M2 2h7v6H2z" fill="#fff" stroke="none"/></svg>
      <svg width="15" height="14" viewBox="0 0 15 14" fill="none" stroke="#bbb"><path d="M1 13C1 6 6 1 14 1M4 13C4 8 8 4 14 4M7 13c0-3 3-6 7-6"/><circle cx="11" cy="12" r="1.200" fill="#eee"/></svg>
      <svg width="17" height="15" viewBox="0 0 17 15" fill="none" stroke="#bbb"><path d="M1 5h3l5-4v13L4 10H1zM11 4.500c1.500 1.500 1.500 4.500 0 6M14 2.500c2.500 3 2.500 7 0 10"/></svg>
      <span class="tray-cn">中</span>
      <svg width="17" height="17" viewBox="0 0 17 17"><path d="m1 2 14-2 2 15-15 2z" fill="#2aa12a"/><path d="M13 5C9 3 5 5 5 7c0 3 8 1 7 4-1 2-5 2-8 0" fill="none" stroke="#fff" stroke-width="2"/></svg>
      <span class="tray-clock">22:11</span>
      <div class="tray-video">
        <svg width="18" height="17" viewBox="0 0 18 17"><path d="M0 0h18v17H0z" fill="#fff"/><path d="m6 4 7 4.500-7 4.500z" fill="#222"/></svg>
        <span class="tray-badge">2</span>
      </div>
      <svg width="17" height="17" viewBox="0 0 17 17"><path d="M0 0h17v14h-6l-2.500 3L6 14H0z" fill="#fff"/><path d="M3 4h11M3 7h11M3 10h7" stroke="#222"/></svg>
      <span class="tray-edge"></span>
    </div>
  </div>

  <!-- items lying over the window -->
  <div class="ime-bar">
    <span></span>
    <span>五</span>
    <svg width="16" height="15" viewBox="0 0 16 15"><path d="M11 0c2 6-2 10-10 9 2 5 12 8 15 0 1-5-2-8-5-9z" fill="#3c4656"/></svg>
    <svg width="13" height="13" viewBox="0 0 13 13" fill="none" stroke="#3c4656" stroke-width="1.300"><circle cx="3" cy="3" r="2"/><path d="M11 7c1 2 0 4-2 5" stroke-width="2.200"/></svg>
    <svg width="19" height="13" viewBox="0 0 19 13"><rect x=".5" y=".5" width="18" height="12" rx="1" fill="none" stroke="#3c4656"/><path d="M3 3.500h13M3 6.500h13M5 9.500h9" stroke="#3c4656" stroke-width="1.500" stroke-dasharray="1.500 1"/></svg>
    <svg width="14" height="15" viewBox="0 0 14 15"><circle cx="7" cy="4" r="3.500" fill="#3c4656"/><path d="M0 15c0-5 3-6 7-6s7 1 7 6z" fill="#3c4656"/></svg>
    <svg width="14" height="14" viewBox="0 0 14 14" fill="#3c4656"><path d="M6 6H3a3 3 0 1 1 3-3zM8 6V3a3 3 0 1 1 3 3zM6 8v3a3 3 0 1 1-3-3zM8 8h3a3 3 0 1 1-3 3z"/></svg>
  </div>
  <svg class="ime-logo" width="31" height="29" viewBox="0 0 31 29"><path d="M0 6 26 0l5 22-24 7z" fill="#2aa12a"/><path d="M24 9C16 6 6 9 8 13c2 3 13 0 15 3s-5 6-14 3" fill="none" stroke="#fff" stroke-width="3.500"/></svg>

  <div class="ptr-ring"></div>
  <svg class="ptr-arrow" width="15" height="21" viewBox="0 0 15 21"><path d="M1 1v15l3.500-3 3 7 3-1.500-3-6.500h5z" fill="#fff" stroke="#333"/></svg>

  <div class="cpu-pill">
    <svg class="cpu-up" width="8" height="9" viewBox="0 0 8 9" fill="none" stroke="#3a8ee6" stroke-width="1.500"><path d="M4 9V1M1 4l3-3 3 3"/></svg>
    <span class="cpu-net">0K/s</span>
    <span class="cpu-plus"><svg width="20" height="20" viewBox="0 0 20 20"><circle cx="9" cy="11" r="9" fill="#2d8fe6"/><path d="M9 7v8M5 11h8" stroke="#fff" stroke-width="2"/><circle cx="18" cy="4" r="3.500" fill="#f4622c"/></svg></span>
    <span class="cpu-temp">CPU <b>55°C</b></span>
  </div>
  <svg class="cpu-ring" width="74" height="78" viewBox="0 0 74 78"><path d="M35 1c10-1 15 3 22 9 9 4 15 14 15 26 0 14-4 26-15 33-9 7-20 9-31 6C13 72 3 62 2 47-1 37 2 25 8 16 14 7 24 1 35 1z" fill="#55c97f"/><circle cx="37" cy="40" r="29" fill="#f5f5f5"/></svg>
  <div class="cpu-num">62<small>%</small></div>

</div>
<script src="https://cdn.jsdelivr.net/npm/bootstrap@5.3.0/dist/js/bootstrap.bundle.min.js"></script>
</body>
</html>
